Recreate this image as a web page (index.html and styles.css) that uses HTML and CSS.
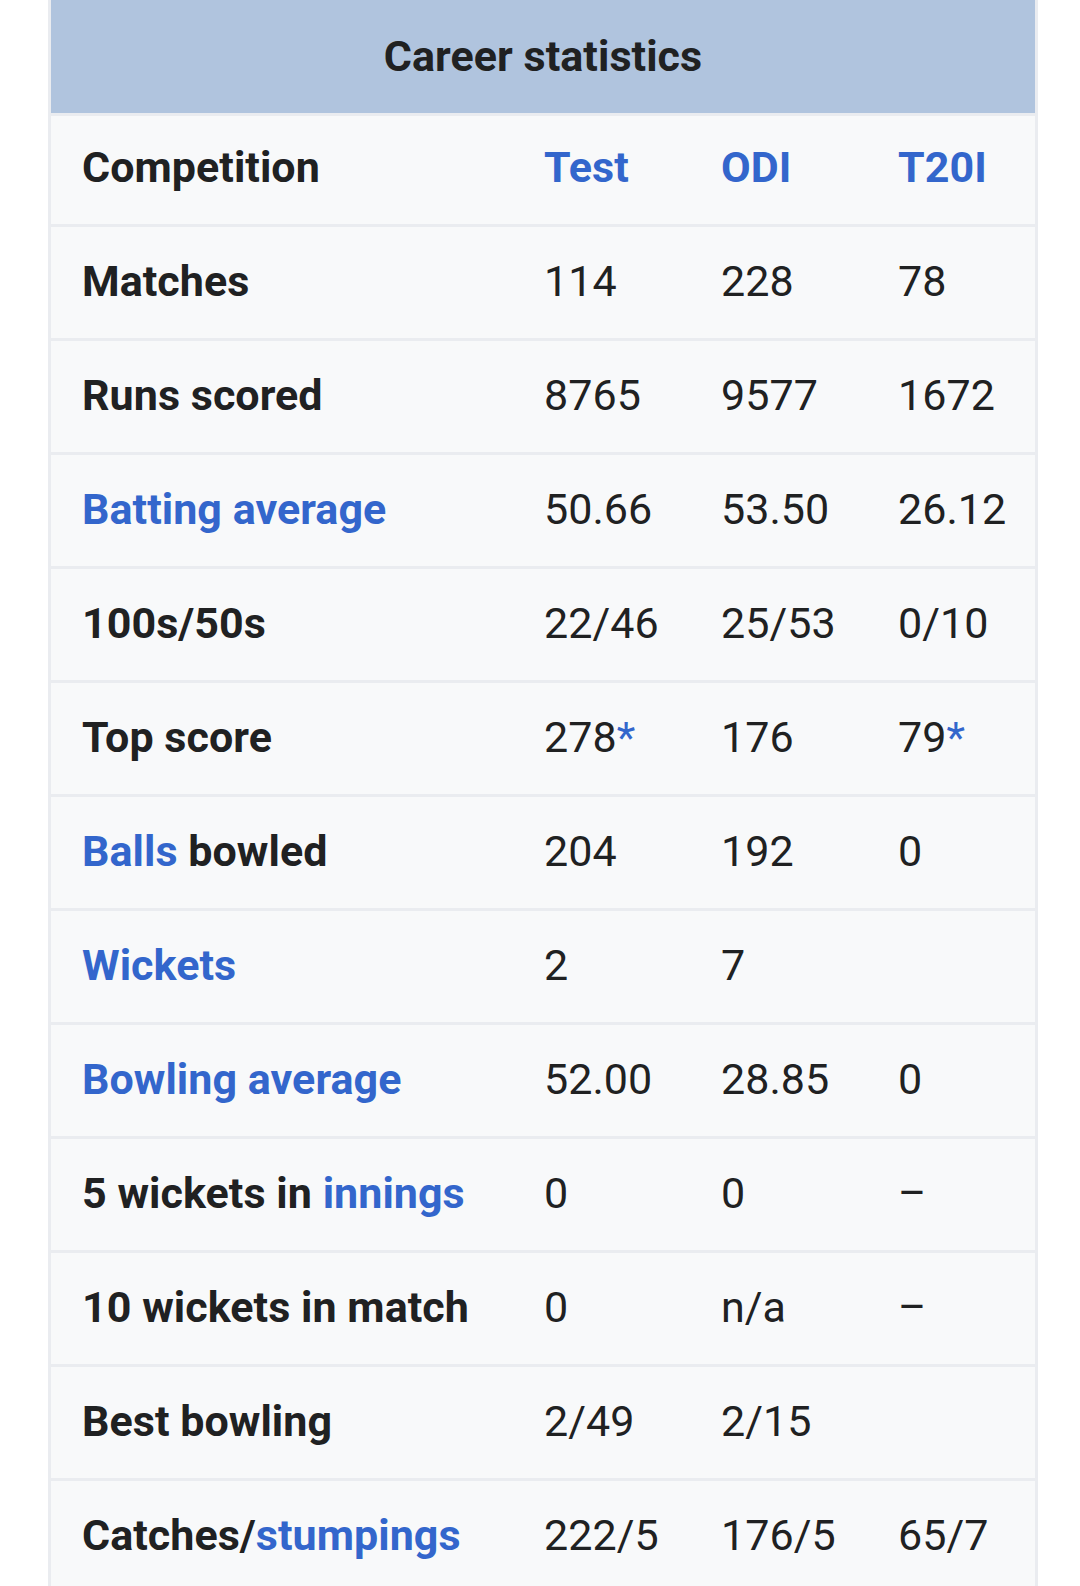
FILE: index.html
```html
<!DOCTYPE html>
<html lang="en">
<head>
<meta charset="utf-8">
<title>Career statistics</title>
<link rel="stylesheet" href="styles.css">
</head>
<body>
<div class="infobox">
  <div class="header">Career statistics</div>
  <div class="row head-row">
    <div class="label">Competition</div>
    <div class="cell"><a class="link">Test</a></div>
    <div class="cell"><a class="link">ODI</a></div>
    <div class="cell"><a class="link">T20I</a></div>
  </div>
  <div class="row">
    <div class="label">Matches</div>
    <div class="cell">114</div>
    <div class="cell">228</div>
    <div class="cell">78</div>
  </div>
  <div class="row">
    <div class="label">Runs scored</div>
    <div class="cell">8765</div>
    <div class="cell">9577</div>
    <div class="cell">1672</div>
  </div>
  <div class="row">
    <div class="label"><a class="link">Batting average</a></div>
    <div class="cell">50.66</div>
    <div class="cell">53.50</div>
    <div class="cell">26.12</div>
  </div>
  <div class="row">
    <div class="label">100s/50s</div>
    <div class="cell">22/46</div>
    <div class="cell">25/53</div>
    <div class="cell">0/10</div>
  </div>
  <div class="row">
    <div class="label">Top score</div>
    <div class="cell">278<a class="link">*</a></div>
    <div class="cell">176</div>
    <div class="cell">79<a class="link">*</a></div>
  </div>
  <div class="row">
    <div class="label"><a class="link">Balls</a> bowled</div>
    <div class="cell">204</div>
    <div class="cell">192</div>
    <div class="cell">0</div>
  </div>
  <div class="row">
    <div class="label"><a class="link">Wickets</a></div>
    <div class="cell">2</div>
    <div class="cell">7</div>
    <div class="cell"></div>
  </div>
  <div class="row">
    <div class="label"><a class="link">Bowling average</a></div>
    <div class="cell">52.00</div>
    <div class="cell">28.85</div>
    <div class="cell">0</div>
  </div>
  <div class="row">
    <div class="label">5 wickets in <a class="link">innings</a></div>
    <div class="cell">0</div>
    <div class="cell">0</div>
    <div class="cell">–</div>
  </div>
  <div class="row">
    <div class="label">10 wickets in match</div>
    <div class="cell">0</div>
    <div class="cell">n/a</div>
    <div class="cell">–</div>
  </div>
  <div class="row">
    <div class="label">Best bowling</div>
    <div class="cell">2/49</div>
    <div class="cell">2/15</div>
    <div class="cell"></div>
  </div>
  <div class="row">
    <div class="label">Catches/<a class="link">stumpings</a></div>
    <div class="cell">222/5</div>
    <div class="cell">176/5</div>
    <div class="cell">65/7</div>
  </div>
</div>
</body>
</html>
```

FILE: styles.css
```css
html, body {
  margin: 0;
  padding: 0;
  background: #ffffff;
}

body {
  font-family: Roboto, "Noto Sans", "Liberation Sans", sans-serif;
  color: #202122;
  font-size: 43px;
  letter-spacing: 0.05px;
}

.infobox {
  margin-left: 48px;
  width: 990px;
  box-sizing: border-box;
  border-left: 3px solid #eaecf0;
  border-right: 3px solid #eaecf0;
  background: #f8f9fa;
}

.header {
  height: 113px;
  box-sizing: border-box;
  padding-bottom: 2px;
  background: #b0c4de;
  display: flex;
  align-items: center;
  justify-content: center;
  font-weight: 700;
}

.row {
  display: grid;
  grid-template-columns: 493px 177px 177px 1fr;
  align-items: center;
  box-sizing: border-box;
  height: 114px;
  padding-bottom: 4px;
  border-top: 3px solid #eaecf0;
}

.head-row {
  height: 111px;
  padding-bottom: 6px;
}

.head-row .cell {
  font-weight: 700;
}

.label {
  padding-left: 31px;
  font-weight: 700;
  white-space: nowrap;
}

.cell {
  white-space: nowrap;
}

.link {
  color: #3366cc;
  text-decoration: none;
}
```
